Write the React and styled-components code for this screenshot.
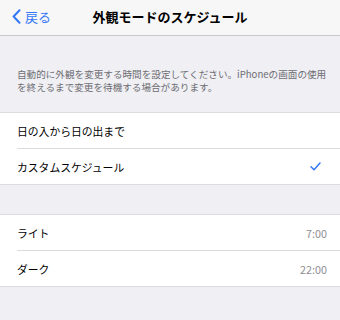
import React from 'react'
import styled, {createGlobalStyle} from 'styled-components'

const GlobalStyle = createGlobalStyle`
  html, body {
    margin: 0;
    padding: 0;
    background: #efeff4;
  }
  body {
    font-family: "Noto Sans CJK JP", "Noto Sans", sans-serif;
    -webkit-font-smoothing: antialiased;
  }
`

const rows1 = [
  {label: '日の入から日の出まで'},
  {label: 'カスタムスケジュール', checked: true},
]

const rows2 = [
  {label: 'ライト', value: '7:00'},
  {label: 'ダーク', value: '22:00'},
]

export default function App() {
  return (
    <Page>
      <GlobalStyle />
      <NavBar>
        <BackButton>
          <svg width="9" height="15" viewBox="0 0 9 15">
            <path d="M7.5 1.2 L1.6 7.5 L7.5 13.8" fill="none" stroke="#3478f6" strokeWidth="2" strokeLinecap="round" strokeLinejoin="round" />
          </svg>
          <span>戻る</span>
        </BackButton>
        <NavTitle>外観モードのスケジュール</NavTitle>
      </NavBar>

      <Description>
        自動的に外観を変更する時間を設定してください。iPhoneの画面の使用を終えるまで変更を待機する場合があります。
      </Description>

      <Group>
        {rows1.map((r) => (
          <Row key={r.label}>
            <Label>{r.label}</Label>
            {r.checked && (
              <svg width="11" height="9" viewBox="0 0 11 9">
                <path d="M1 4.8 L4 7.8 L10 1" fill="none" stroke="#3478f6" strokeWidth="1.5" strokeLinecap="round" strokeLinejoin="round" />
              </svg>
            )}
          </Row>
        ))}
      </Group>

      <Gap />

      <Group>
        {rows2.map((r) => (
          <Row key={r.label} $pad={13}>
            <Label>{r.label}</Label>
            <Value>{r.value}</Value>
          </Row>
        ))}
      </Group>
    </Page>
  )
}

// === Styles === //
const Page = styled.div`
  width: 340px;
  height: 320px;
  background: #efeff4;
  overflow: hidden;
`

const NavBar = styled.div`
  height: 35px;
  background: #f7f7f7;
  border-bottom: 1px solid #c8c8cc;
  display: flex;
  align-items: center;
  justify-content: center;
  position: relative;
`

const BackButton = styled.div`
  position: absolute;
  left: 12px;
  top: 0;
  height: 35px;
  display: flex;
  align-items: center;
  gap: 4px;
  color: #3478f6;
  font-size: 13px;
  line-height: 16px;
  padding-bottom: 2px;
  box-sizing: border-box;
`

const NavTitle = styled.div`
  font-size: 13px;
  font-weight: 600;
  color: #000;
  line-height: 16px;
  padding-bottom: 2px;
`

const Description = styled.div`
  padding: 32px 10px 17px 17px;
  font-size: 9.6px;
  line-height: 12.5px;
  color: #6d6d72;
  height: 76px;
  box-sizing: border-box;
`

const Group = styled.div`
  background: #fff;
  border-top: 1px solid #dcdce0;
  border-bottom: 1px solid #dcdce0;
`

const Row = styled.div`
  height: 35px;
  margin-left: 17px;
  padding-right: ${(p) => p.$pad || 19}px;
  display: flex;
  align-items: center;
  justify-content: space-between;
  box-sizing: border-box;
  & + & {
    height: 36px;
    border-top: 1px solid #dcdce0;
  }
`

const Label = styled.div`
  font-size: 10.8px;
  color: #000;
  line-height: 14px;
`

const Value = styled.div`
  font-size: 10.8px;
  color: #8e8e93;
  line-height: 14px;
`

const Gap = styled.div`
  height: 29px;
`
